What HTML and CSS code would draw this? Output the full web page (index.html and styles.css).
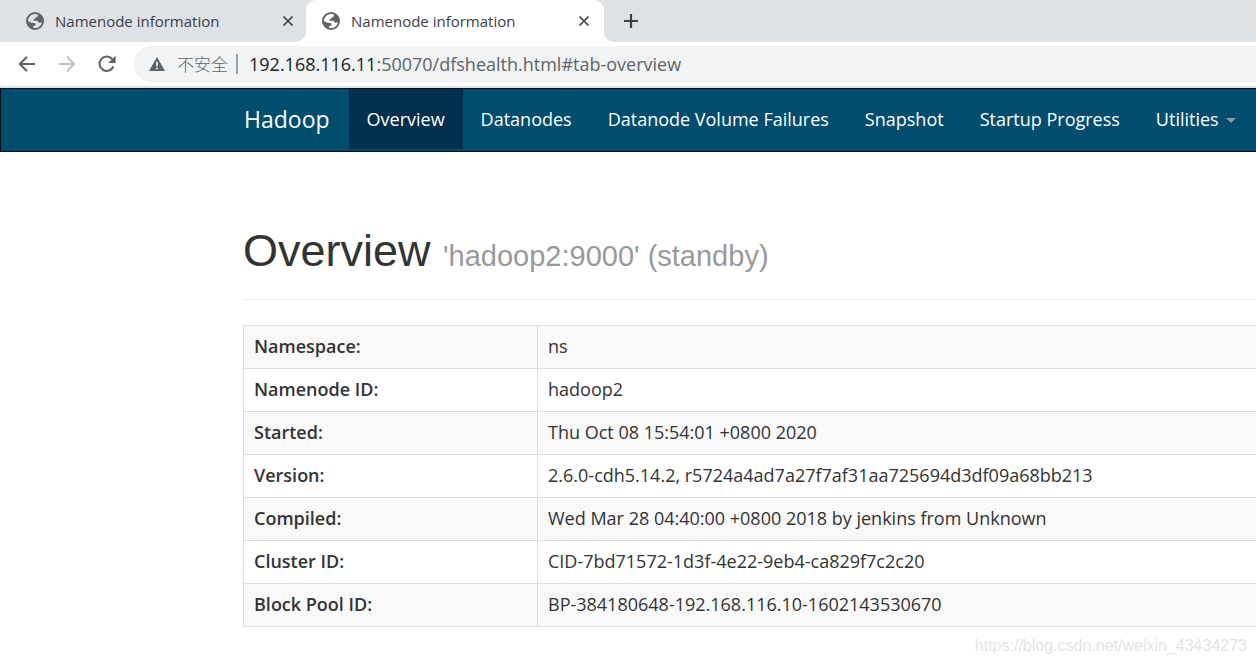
FILE: index.html
```html
<!DOCTYPE html>
<html lang="en">
<head>
<meta charset="utf-8">
<title>Namenode information</title>
<link rel="stylesheet" href="styles.css">
</head>
<body>
<svg class="defs" aria-hidden="true">
  <symbol id="globe" viewBox="0 0 24 24">
    <circle cx="12" cy="12" r="12" fill="#5f6368"/>
    <path fill="currentColor" d="M12 2.600 C13.700 2.600 15 3 16.200 3.600 C16.400 5.800 15.200 6.800 13.600 7 C12.400 7.200 12.600 9.200 10.800 9.600 C9.400 10 9.600 11.400 10.600 11.600 L14.500 11.800 C16.500 12 16.200 14.400 18 14.400 L21.200 13.600 C20.200 18.500 16.500 21.400 12 21.400 L9.500 21 L9.500 18.600 C12.500 18.600 13.200 17.500 12.600 15.800 C12 14.200 9.500 14.600 7.200 14.200 C5 13.800 4.500 12.600 2.600 12 C2.700 7 6.500 2.700 12 2.600 Z"/>
  </symbol>
  <symbol id="close" viewBox="0 0 12 12">
    <path d="M1.500 1.500 L10.500 10.500 M10.500 1.500 L1.500 10.500" stroke="#3c4043" stroke-width="1.700" fill="none"/>
  </symbol>
</svg>

<header class="browser">
  <div class="tabs">
    <div class="tab">
      <svg class="favicon"><use href="#globe"/></svg>
      <span class="tab-title">Namenode information</span>
      <button class="tab-close" aria-label="Close tab"><svg width="12" height="12"><use href="#close"/></svg></button>
    </div>
    <div class="tab tab-active">
      <svg class="favicon"><use href="#globe"/></svg>
      <span class="tab-title">Namenode information</span>
      <button class="tab-close" aria-label="Close tab"><svg width="12" height="12"><use href="#close"/></svg></button>
    </div>
    <button class="new-tab" aria-label="New tab">
      <svg width="16" height="16" viewBox="0 0 16 16"><path d="M8 1 V15 M1 8 H15" stroke="#3c4043" stroke-width="2.200"/></svg>
    </button>
  </div>
  <div class="toolbar">
    <button class="tool" aria-label="Back">
      <svg width="18" height="18" viewBox="0 0 18 18" fill="none" stroke="#5f6368" stroke-width="2"><path d="M17 9 H2.500 M9 1.800 L1.800 9 L9 16.200"/></svg>
    </button>
    <button class="tool" aria-label="Forward" disabled>
      <svg width="18" height="18" viewBox="0 0 18 18" fill="none" stroke="#bdc1c6" stroke-width="2"><path d="M1 9 H15.500 M9 1.800 L16.200 9 L9 16.200"/></svg>
    </button>
    <button class="tool" aria-label="Reload">
      <svg width="18" height="18" viewBox="0 0 18 18"><path d="M15.400 11.500 A7.200 7.200 0 1 1 14.200 4" fill="none" stroke="#5f6368" stroke-width="2.100"/><path d="M17.600 0.600 V8 H10.200 Z" fill="#5f6368"/></svg>
    </button>
    <div class="address">
      <svg width="16" height="14" viewBox="0 0 16 14"><path d="M8 0 L16 14 H0 Z" fill="#5f6368"/><path d="M8 4.800 V9.200 M8 10.400 V12.200" stroke="#f1f3f4" stroke-width="1.700"/></svg>
      <span class="insecure" lang="zh">不安全</span>
      <span class="url"><span class="host">192.168.116.11</span>:50070/dfshealth.html#tab-overview</span>
    </div>
  </div>
</header>

<nav class="navbar">
  <a class="brand" href="#">Hadoop</a>
  <a class="nav-link nav-link-active" href="#tab-overview">Overview</a>
  <a class="nav-link" href="#tab-datanode">Datanodes</a>
  <a class="nav-link" href="#tab-datanode-volume-failures">Datanode Volume Failures</a>
  <a class="nav-link" href="#tab-snapshot">Snapshot</a>
  <a class="nav-link" href="#tab-startup-progress">Startup Progress</a>
  <a class="nav-link" href="#utilities">Utilities<span class="caret"></span></a>
</nav>

<main class="content">
  <h1 class="page-title">Overview <small>'hadoop2:9000' (standby)</small></h1>
  <table class="summary">
    <tr><th scope="row">Namespace:</th><td>ns</td></tr>
    <tr><th scope="row">Namenode ID:</th><td>hadoop2</td></tr>
    <tr><th scope="row">Started:</th><td>Thu Oct 08 15:54:01 +0800 2020</td></tr>
    <tr><th scope="row">Version:</th><td>2.6.0-cdh5.14.2, r5724a4ad7a27f7af31aa725694d3df09a68bb213</td></tr>
    <tr><th scope="row">Compiled:</th><td>Wed Mar 28 04:40:00 +0800 2018 by jenkins from Unknown</td></tr>
    <tr><th scope="row">Cluster ID:</th><td>CID-7bd71572-1d3f-4e22-9eb4-ca829f7c2c20</td></tr>
    <tr><th scope="row">Block Pool ID:</th><td>BP-384180648-192.168.116.10-1602143530670</td></tr>
  </table>
</main>
<footer class="watermark">https://blog.csdn.net/weixin_43434273</footer>
</body>
</html>
```
FILE: styles.css
```css
* { box-sizing: border-box; }
body {
  margin: 0;
  background: #fff;
  color: #333;
  font-family: "Open Sans", "Noto Sans", sans-serif;
  font-size: 18px;
  overflow-x: hidden;
}
button { border: 0; padding: 0; background: none; display: flex; align-items: center; justify-content: center; }
svg { display: block; flex: none; }
.defs { position: absolute; width: 0; height: 0; }

.browser { border-bottom: 2px solid #dee1e6; }
.tabs {
  display: flex;
  height: 42px;
  background: linear-gradient(#dee1e6, #dee1e6) top / 100% 30px no-repeat, #fff;
}
.tab {
  display: flex;
  align-items: center;
  width: 306px;
  padding: 0 12px 0 26px;
  background: #dee1e6;
  border-bottom-right-radius: 10px;
  font-size: 15px;
  color: #3c4043;
}
.tab-active {
  width: 298px;
  padding: 0 14px 0 16px;
  background: #fff;
  border-radius: 10px 10px 0 0;
}
.favicon { width: 18px; height: 18px; color: #dee1e6; }
.tab-active .favicon { color: #fff; }
.tab-title { flex: 1; margin-left: 11px; white-space: nowrap; }
.tab-close { width: 12px; height: 40px; }
.new-tab { flex: 1; justify-content: flex-start; padding-left: 19px; background: #dee1e6; border-bottom-left-radius: 10px; }
.toolbar { display: flex; align-items: center; height: 44px; padding: 4px 0 4px 18px; }
.tool { width: 18px; height: 36px; margin-right: 22px; }
.address {
  flex: 1;
  display: flex;
  align-items: center;
  height: 36px;
  margin-left: -4px;
  padding-left: 15px;
  background: #f1f3f4;
  border-radius: 18px 0 0 18px;
  color: #5f6368;
  font-size: 17px;
  white-space: nowrap;
}
.insecure {
  margin-left: 12px;
  padding-right: 8px;
  border-right: 2px solid #9aa0a6;
  font-family: "Noto Sans CJK SC", sans-serif;
  font-weight: 300;
  line-height: 20px;
}
.url { margin-left: 11px; font-size: 18px; }
.host { color: #202124; }

.navbar {
  display: flex;
  height: 64px;
  padding-left: 243px;
  padding-bottom: 2px;
  background: #004d6e;
  border: 1px solid #000d14;
  border-right: 0;
  white-space: nowrap;
}
.brand, .nav-link { display: flex; align-items: center; color: #fff; text-decoration: none; }
.brand { padding-right: 19px; font-size: 23px; }
.nav-link { padding: 0 18px; }
.nav-link-active { background: #00304d; }
.caret { margin: 3px 0 0 7px; border: 5px solid transparent; border-top-color: #999; border-bottom: 0; }

.content { padding: 72px 0 0 243px; }
.page-title {
  margin: 0 0 25px;
  padding-bottom: 16px;
  border-bottom: 1px solid #eee;
  font-family: "Liberation Sans", Arial, sans-serif;
  font-size: 45px;
  font-weight: 400;
  line-height: 53px;
}
.page-title small { font-size: 29px; color: #999; }
.summary { width: 100%; border-collapse: collapse; white-space: nowrap; }
.summary th, .summary td {
  height: 43px;
  padding: 0 10px 2px;
  border: 1px solid #ddd;
  text-align: left;
  line-height: 25px;
}
.summary th { width: 294px; font-weight: 600; }
.summary td { border-right: 0; }
.summary tr:nth-child(odd) { background: #f9f9f9; }
.watermark {
  padding: 9px 9px 0 0;
  font-family: "Liberation Sans", Arial, sans-serif;
  font-size: 16px;
  line-height: 20px;
  text-align: right;
  color: #e4e4e4;
}
```
